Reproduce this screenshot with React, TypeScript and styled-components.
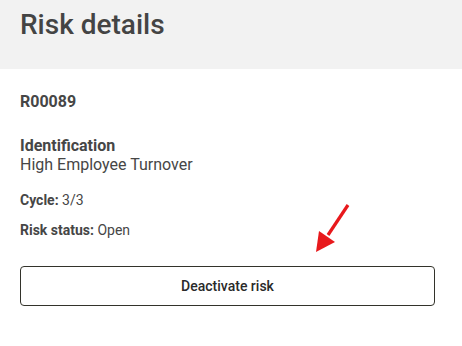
import React from "react";
import styled, { createGlobalStyle } from "styled-components";

const Global = createGlobalStyle`
  html, body { margin: 0; padding: 0; background: #fff; }
  body { font-family: Roboto, "Noto Sans", Arial, sans-serif; color: #464646; }
`;

const Page = styled.div`
  width: 462px;
  height: 346px;
  position: relative;
  overflow: hidden;
`;

const Header = styled.header`
  background: #f2f2f2;
  height: 69px;
  padding: 0 20px;
  box-sizing: border-box;
  display: flex;
  align-items: flex-start;
`;

const Title = styled.h1`
  margin: 8px 0 0;
  font-size: 28px;
  font-weight: 500;
  line-height: 33px;
  color: #444;
`;

const Body = styled.main`
  padding: 24px 27px 0 20px;
  display: flex;
  flex-direction: column;
`;

const Code = styled.div`
  font-size: 16px;
  font-weight: 700;
  line-height: 18px;
  color: #464646;
`;

const Section = styled.div`
  margin-top: 25px;
  display: flex;
  flex-direction: column;
`;

const Label = styled.div`
  font-size: 16px;
  font-weight: 700;
  line-height: 19px;
`;

const Value = styled.div`
  font-size: 16px;
  line-height: 19px;
`;

const Field = styled.div<{ $mt: number }>`
  margin-top: ${(p) => p.$mt}px;
  font-size: 14px;
  line-height: 18px;
  b { font-weight: 700; }
`;

const Button = styled.button`
  margin-top: 27px;
  height: 40px;
  width: 415px;
  border: 1px solid #33332b;
  border-radius: 4px;
  background: #fff;
  font-family: Roboto, Arial, sans-serif;
  font-size: 14px;
  font-weight: 500;
  color: #2a2a2a;
  cursor: pointer;
`;

const Arrow = styled.svg`
  position: absolute;
  left: 310px;
  top: 200px;
`;

export default function App() {
  return (
    <Page>
      <Global />
      <Header>
        <Title>Risk details</Title>
      </Header>
      <Body>
        <Code>R00089</Code>
        <Section>
          <Label>Identification</Label>
          <Value>High Employee Turnover</Value>
        </Section>
        <Field $mt={17}>
          <b>Cycle:</b> 3/3
        </Field>
        <Field $mt={12}>
          <b>Risk status:</b> Open
        </Field>
        <Button>Deactivate risk</Button>
      </Body>
      <Arrow width="44" height="56" viewBox="0 0 44 56">
        <line x1="38" y1="5" x2="18" y2="35" stroke="#e8191c" strokeWidth="3.2" />
        <polygon points="6,52 9,31 25,42" fill="#e8191c" />
      </Arrow>
    </Page>
  );
}
